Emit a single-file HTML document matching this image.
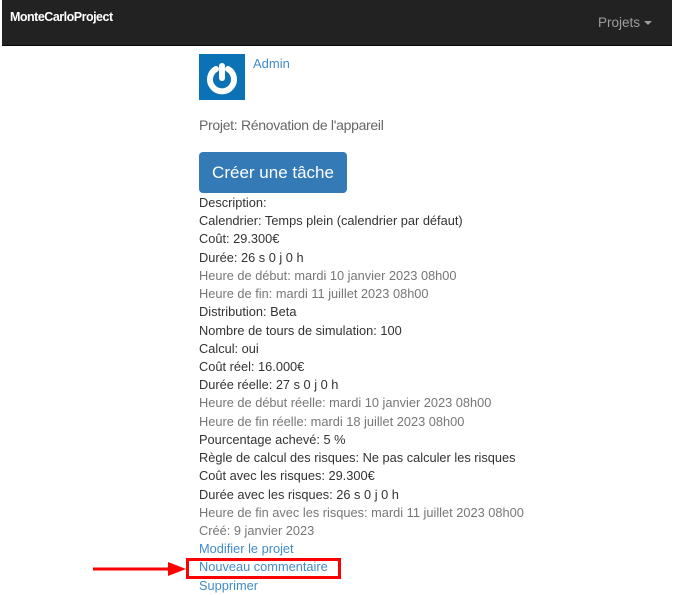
<!DOCTYPE html>
<html><head><meta charset="utf-8"><style>
*{margin:0;padding:0;box-sizing:border-box}
body{width:674px;height:594px;overflow:hidden;background:#fff;font-family:"Liberation Sans",sans-serif;font-size:13px;color:#333;position:relative}
.nav{position:absolute;left:2px;top:0;width:670px;height:46px;background:#222;border-bottom:1px solid #080808}
.brand{position:absolute;left:8px;top:10px;color:#fff;font-weight:bold;font-size:12.5px;letter-spacing:-0.5px}
.proj{position:absolute;right:20px;top:15px;color:#9d9d9d;font-size:13.5px}
.caret{display:inline-block;width:0;height:0;border-left:4px solid transparent;border-right:4px solid transparent;border-top:4px solid #9d9d9d;vertical-align:middle;margin-left:4px}
.av{position:absolute;left:199px;top:54px;width:46px;height:46px;background:#0b72b5}
.admin{position:absolute;left:253px;top:56px;color:#428bca;font-size:13px}
.pt{position:absolute;left:199px;top:117px;color:#666;font-size:14px;letter-spacing:-0.3px}
.btn{position:absolute;left:199px;top:152px;width:148px;height:41px;background:#337ab7;border-radius:4px;color:#fff;font-size:17px;text-align:center;line-height:41px}
.lines{position:absolute;left:199px;top:194px;line-height:18.22px;font-size:12.8px}
.g{color:#777}.a{color:#428bca}
.box{position:absolute;left:186px;top:558px;width:155px;height:21px;border:3px solid #f00}
</style></head><body>
<div class="nav"><div class="brand">MonteCarloProject</div><div class="proj">Projets<span class="caret"></span></div></div>
<div class="av"><svg width="46" height="46"><path d="M17 15 A12 12 0 1 0 29 15" fill="none" stroke="#fff" stroke-width="6" stroke-linecap="round"/><line x1="23" y1="12" x2="23" y2="24" stroke="#fff" stroke-width="6" stroke-linecap="round"/></svg></div>
<div class="admin">Admin</div>
<div class="pt">Projet: Rénovation de l'appareil</div>
<div class="btn">Créer une tâche</div>
<div class="lines">
<div>Description:</div>
<div>Calendrier: Temps plein (calendrier par défaut)</div>
<div>Coût: 29.300€</div>
<div>Durée: 26 s 0 j 0 h</div>
<div class="g">Heure de début: mardi 10 janvier 2023 08h00</div>
<div class="g">Heure de fin: mardi 11 juillet 2023 08h00</div>
<div>Distribution: Beta</div>
<div>Nombre de tours de simulation: 100</div>
<div>Calcul: oui</div>
<div>Coût réel: 16.000€</div>
<div>Durée réelle: 27 s 0 j 0 h</div>
<div class="g">Heure de début réelle: mardi 10 janvier 2023 08h00</div>
<div class="g">Heure de fin réelle: mardi 18 juillet 2023 08h00</div>
<div>Pourcentage achevé: 5 %</div>
<div>Règle de calcul des risques: Ne pas calculer les risques</div>
<div>Coût avec les risques: 29.300€</div>
<div>Durée avec les risques: 26 s 0 j 0 h</div>
<div class="g">Heure de fin avec les risques: mardi 11 juillet 2023 08h00</div>
<div class="g">Créé: 9 janvier 2023</div>
<div class="a">Modifier le projet</div>
<div class="a">Nouveau commentaire</div>
<div class="a">Supprimer</div>
</div>
<div class="box"></div>
<svg style="position:absolute;left:90px;top:560px" width="98" height="20"><line x1="3" y1="9" x2="80" y2="9" stroke="#f00" stroke-width="3"/><polygon points="78,2 96,9 78,16" fill="#f00"/></svg>
</body></html>
